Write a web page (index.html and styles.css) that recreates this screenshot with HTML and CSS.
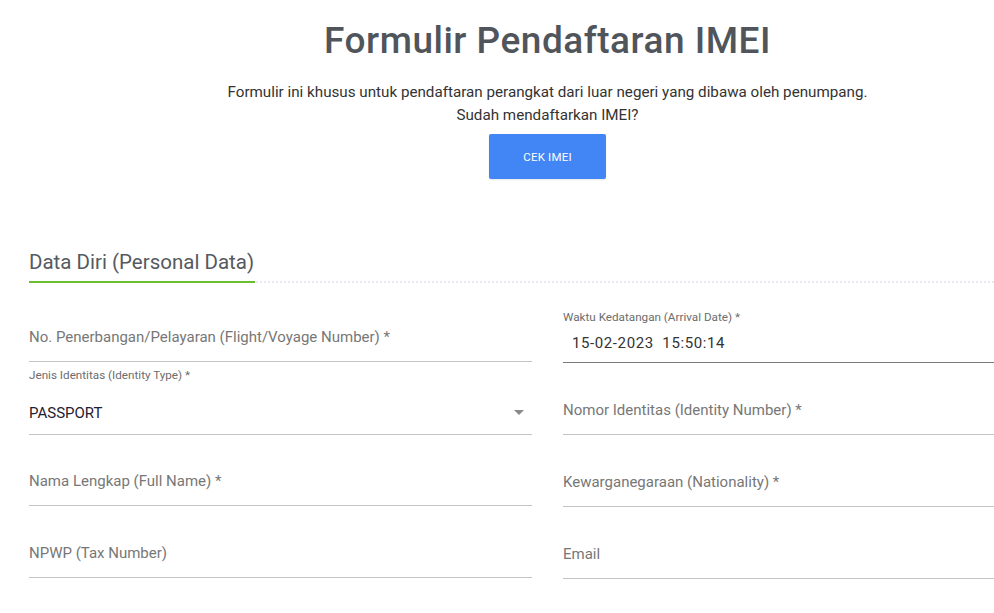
FILE: index.html
```html
<!DOCTYPE html>
<html lang="id">
<head>
<meta charset="utf-8">
<title>Formulir Pendaftaran IMEI</title>
<link rel="stylesheet" href="styles.css">
</head>
<body>
<div class="page">
  <header class="intro">
    <h1 class="title">Formulir Pendaftaran IMEI</h1>
    <p class="lead">Formulir ini khusus untuk pendaftaran perangkat dari luar negeri yang dibawa oleh penumpang.<br>Sudah mendaftarkan IMEI?</p>
    <button class="btn" type="button">CEK IMEI</button>
  </header>

  <section class="section">
    <div class="section-head">
      <h2 class="section-title">Data Diri (Personal Data)</h2>
    </div>

    <div class="grid">
      <div class="col">
        <div class="field f-l1"><span class="ph">No. Penerbangan/Pelayaran (Flight/Voyage Number) *</span></div>
        <div class="field f-l2 select">
          <span class="small-label">Jenis Identitas (Identity Type) *</span>
          <span class="value value-sel">PASSPORT</span>
          <span class="caret"></span>
        </div>
        <div class="field f-l3"><span class="ph">Nama Lengkap (Full Name) *</span></div>
        <div class="field f-l4"><span class="ph">NPWP (Tax Number)</span></div>
      </div>
      <div class="col">
        <div class="field f-r1 dark">
          <span class="small-label">Waktu Kedatangan (Arrival Date) *</span>
          <span class="value value-date">15-02-2023&nbsp;&nbsp;15:50:14</span>
        </div>
        <div class="field f-r2"><span class="ph">Nomor Identitas (Identity Number) *</span></div>
        <div class="field f-r3"><span class="ph">Kewarganegaraan (Nationality) *</span></div>
        <div class="field f-r4"><span class="ph">Email</span></div>
      </div>
    </div>
  </section>
</div>
</body>
</html>
```

FILE: styles.css
```css
html, body {
  margin: 0;
  padding: 0;
  background: #ffffff;
}
body {
  overflow: hidden;
  font-family: Roboto, "Noto Sans", Arial, sans-serif;
  color: #333333;
}
.page {
  width: 1037px;
  margin-left: 29px;
}
.intro {
  display: flex;
  flex-direction: column;
  align-items: center;
  text-align: center;
}
.title {
  margin: 18px 0 0;
  font-size: 37px;
  line-height: 46px;
  font-weight: 500;
  letter-spacing: 0.5px;
  color: #50555c;
}
.lead {
  margin: 17px 0 0;
  font-size: 15.2px;
  line-height: 23px;
  color: #333333;
}
.btn {
  margin-top: 7px;
  width: 117px;
  height: 45px;
  border: 0;
  border-radius: 2px;
  background: #4285f4;
  color: #ffffff;
  font-family: Roboto, "Noto Sans", Arial, sans-serif;
  font-size: 11.5px;
  letter-spacing: 0.2px;
  box-shadow: 0 1px 2px rgba(0,0,0,0.1);
}
.section {
  margin-top: 70px;
}
.section-head {
  border-bottom: 2px dotted #e6eaee;
  display: flex;
}
.section-title {
  margin: 0 0 -2px;
  padding-bottom: 6px;
  border-bottom: 2px solid #6abf2e;
  width: 226px;
  font-size: 20.5px;
  line-height: 26px;
  font-weight: 400;
  color: #555a60;
}
.grid {
  display: grid;
  grid-template-columns: 503px 503px;
  column-gap: 31px;
  margin-top: 7px;
}
.col {
  display: flex;
  flex-direction: column;
}
.field {
  position: relative;
  box-sizing: border-box;
  display: flex;
  flex-direction: column;
  justify-content: flex-end;
  border-bottom: 1px solid #c4c4c4;
  padding-bottom: 14px;
}
.field.dark {
  border-bottom-color: #7a7a7a;
}
.ph {
  font-size: 15px;
  line-height: 20px;
  color: #777777;
}
.small-label {
  font-size: 11.7px;
  line-height: 14px;
  color: #6d6d6d;
}
.value {
  font-size: 15px;
  line-height: 20px;
}
.value-sel {
  margin-top: 21px;
  color: #1f2030;
}
.value-date {
  margin-top: 9px;
  padding-left: 9px;
  color: #333333;
  letter-spacing: 0.6px;
}
.f-l2 { padding-bottom: 11px; }
.f-r1 { padding-bottom: 9px; }
.caret {
  position: absolute;
  right: 8px;
  bottom: 19px;
  width: 0;
  height: 0;
  border-left: 5px solid transparent;
  border-right: 5px solid transparent;
  border-top: 5px solid #8a8a8a;
}
.f-l1 { height: 72px; }
.f-l2 { height: 73px; }
.f-l3 { height: 71px; }
.f-l4 { height: 72px; }
.f-r1 { height: 73px; }
.f-r2 { height: 72px; }
.f-r3 { height: 72px; }
.f-r4 { height: 72px; }
```
